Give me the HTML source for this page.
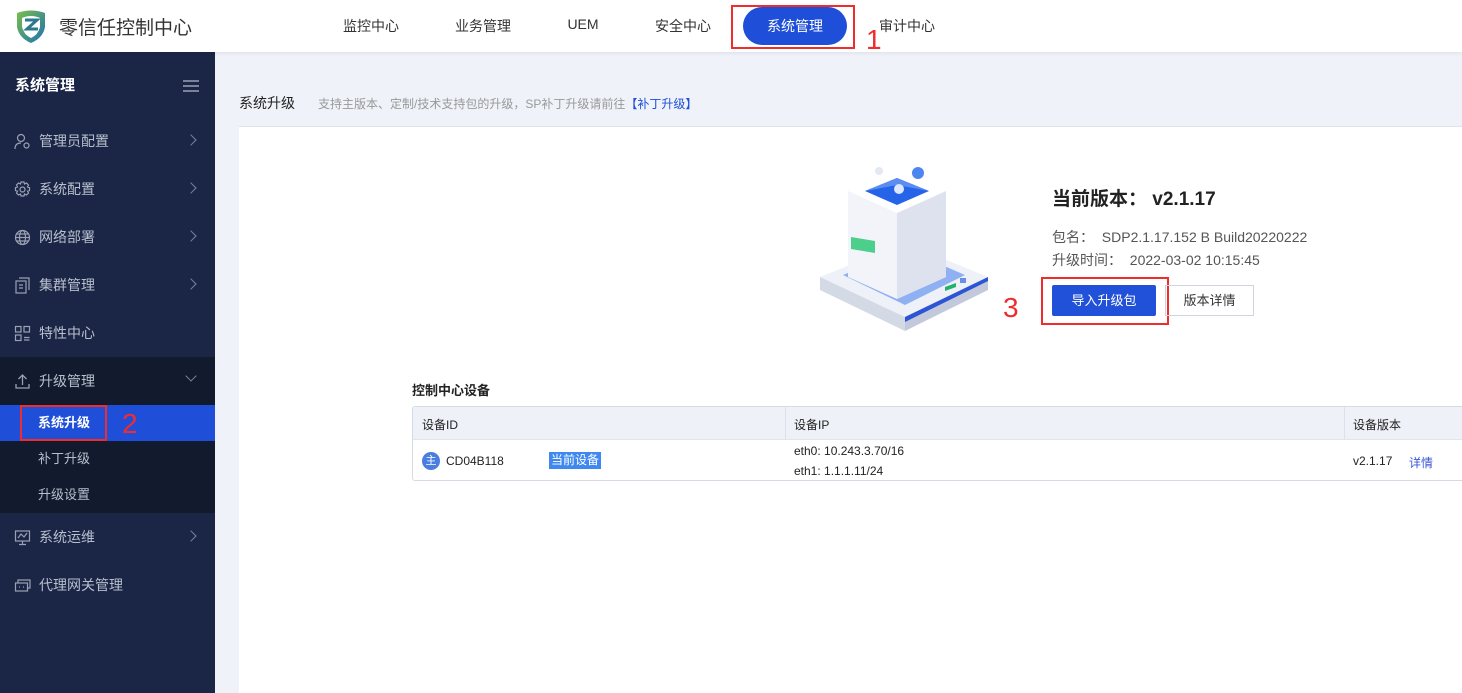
<!DOCTYPE html>
<html><head><meta charset="utf-8">
<style>
*{margin:0;padding:0;box-sizing:border-box}
body{width:1462px;height:693px;overflow:hidden;background:#eff2f9;font-family:"Liberation Sans","Noto Sans CJK SC",sans-serif;position:relative;color:#333}
.abs{position:absolute}
.hdr{left:0;top:0;width:1462px;height:52px;background:#fff;box-shadow:0 1px 4px rgba(0,0,0,.08);z-index:2}
.nav{top:16px;font-size:14px;color:#333;transform:translateX(-50%);white-space:nowrap}
.side{left:0;top:52px;width:215px;height:641px;background:#1b2647}
.item{left:0;width:215px;height:48px;color:#b8bfcc;font-size:14px;line-height:48px;padding-left:39px}
.ico{position:absolute;left:14px;top:16px;width:17px;height:17px}
.chev{position:absolute;left:187px;top:19px;width:8px;height:8px;border-right:1.3px solid #7a8299;border-top:1.3px solid #7a8299;transform:rotate(45deg)}
.sub{left:0;width:215px;height:36px;line-height:36px;padding-left:38px;font-size:13px;color:#b8bfcc}
.red{border:2px solid #f02c2c}
.rnum{color:#f02c2c;font-size:28px;font-family:"Liberation Sans",sans-serif}
</style></head><body>
<div class="abs hdr">
  <svg class="abs" style="left:15px;top:9px" width="32" height="35" viewBox="0 0 32 35">
    <defs><linearGradient id="g" x1="0" y1="0" x2="1" y2="1"><stop offset="0" stop-color="#7ac04a"/><stop offset="1" stop-color="#1c6fb5"/></linearGradient></defs>
    <path d="M2 4 Q16 -1 30 4 L30 18 Q28 29 16 34 Q4 29 2 18Z" fill="url(#g)"/>
    <path d="M7 9 Q16 5 25 9 L25 18 Q23 26 16 29 Q9 26 7 18Z" fill="#fff"/>
    <path d="M10 11 L22 11 L12 20 L23 20" stroke="#2a7a8c" stroke-width="3" fill="none"/>
  </svg>
  <div class="abs" style="left:59px;top:13px;font-size:19px;color:#333">零信任控制中心</div>
  <div class="abs nav" style="left:371px">监控中心</div>
  <div class="abs nav" style="left:483px">业务管理</div>
  <div class="abs nav" style="left:583px">UEM</div>
  <div class="abs nav" style="left:683px">安全中心</div>
  <div class="abs red" style="left:731px;top:5px;width:124px;height:44px"></div>
  <div class="abs" style="left:743px;top:7px;width:104px;height:38px;border-radius:19px;background:#1f4fd8;color:#fff;font-size:14px;line-height:38px;text-align:center">系统管理</div>
  <div class="abs nav" style="left:907px">审计中心</div>
  <div class="abs rnum" style="left:866px;top:24px">1</div>
</div>

<div class="abs side">
  <div class="abs" style="left:15px;top:22px;color:#fff;font-size:15px;font-weight:bold">系统管理</div>
  <div class="abs" style="left:183px;top:28px;width:16px;height:2px;background:#7a8299;box-shadow:0 5px 0 #7a8299,0 10px 0 #7a8299"></div>
</div>
<div class="abs item" style="top:117px"><svg class="ico" viewBox="0 0 17 17" fill="none" stroke="#9aa1b2" stroke-width="1.2"><circle cx="7" cy="5" r="3.5"/><path d="M1 16 Q1 10 7 10"/><circle cx="12.5" cy="12.5" r="2.5"/></svg>管理员配置<span class="chev"></span></div>
<div class="abs item" style="top:165px"><svg class="ico" viewBox="0 0 17 17" fill="none" stroke="#9aa1b2" stroke-width="1.2"><circle cx="8.5" cy="8.5" r="2.5"/><path d="M7 1h3l.5 2 2-1 2 2-1 2 2 .5v3l-2 .5 1 2-2 2-2-1-.5 2h-3l-.5-2-2 1-2-2 1-2-2-.5v-3l2-.5-1-2 2-2 2 1z"/></svg>系统配置<span class="chev"></span></div>
<div class="abs item" style="top:213px"><svg class="ico" viewBox="0 0 17 17" fill="none" stroke="#9aa1b2" stroke-width="1.2"><circle cx="8.5" cy="8.5" r="7"/><ellipse cx="8.5" cy="8.5" rx="3" ry="7"/><path d="M1.5 8.5h14M2.5 5h12M2.5 12h12"/></svg>网络部署<span class="chev"></span></div>
<div class="abs item" style="top:261px"><svg class="ico" viewBox="0 0 17 17" fill="none" stroke="#9aa1b2" stroke-width="1.2"><rect x="2" y="4" width="10" height="12"/><path d="M5 1h10v12"/><path d="M5 8h4M5 11h4"/></svg>集群管理<span class="chev"></span></div>
<div class="abs item" style="top:309px"><svg class="ico" viewBox="0 0 17 17" fill="none" stroke="#9aa1b2" stroke-width="1.2"><rect x="1.5" y="1.5" width="5.5" height="5.5"/><rect x="10" y="1.5" width="5.5" height="5.5"/><rect x="1.5" y="10" width="5.5" height="5.5"/><path d="M10 12.5h5.5M10 15h5.5"/></svg>特性中心</div>
<div class="abs" style="left:0;top:357px;width:215px;height:156px;background:#121a2e"></div>
<div class="abs item" style="top:357px"><svg class="ico" viewBox="0 0 17 17" fill="none" stroke="#9aa1b2" stroke-width="1.3"><path d="M8.5 12V2M4.5 6l4-4 4 4M2 11v4h13v-4"/></svg>升级管理<span class="chev" style="transform:rotate(135deg);top:15px"></span></div>
<div class="abs sub" style="top:405px;background:#1f4fd8;color:#fff;font-weight:bold">系统升级</div>
<div class="abs red" style="left:20px;top:405px;width:87px;height:36px"></div>
<div class="abs rnum" style="left:122px;top:408px">2</div>
<div class="abs sub" style="top:441px">补丁升级</div>
<div class="abs sub" style="top:477px">升级设置</div>
<div class="abs item" style="top:513px"><svg class="ico" viewBox="0 0 17 17" fill="none" stroke="#9aa1b2" stroke-width="1.2"><rect x="1.5" y="2" width="14" height="10"/><path d="M4 9l3-4 3 3 3-4M8.5 12v3M5 15.5h7"/></svg>系统运维<span class="chev"></span></div>
<div class="abs item" style="top:561px"><svg class="ico" viewBox="0 0 17 17" fill="none" stroke="#9aa1b2" stroke-width="1.2"><rect x="1.5" y="6" width="12" height="8"/><path d="M4 6V3h12v8h-2.5M5 10h1M9 10h1"/></svg>代理网关管理</div>

<div class="abs" style="left:239px;top:93px;font-size:14px;color:#222">系统升级</div>
<div class="abs" style="left:318px;top:95px;font-size:12px;color:#999">支持主版本、定制/技术支持包的升级，SP补丁升级请前往<span style="color:#1f4fd8">【补丁升级】</span></div>
<div class="abs" style="left:239px;top:126px;width:1223px;height:567px;background:#fff;border-top:1px solid #e2e4ea"></div>

<svg class="abs" style="left:815px;top:165px" width="178" height="170" viewBox="0 0 178 170">
  <path d="M5 112 L90 78 L173 112 L90 152Z" fill="#eef1f8"/>
  <path d="M5 112 L90 152 L90 166 L5 125Z" fill="#d4d9e6"/>
  <path d="M173 112 L90 152 L90 166 L173 125Z" fill="#c3c9da"/>
  <path d="M90 152 L173 112 L173 116 L90 157Z" fill="#2b55d4"/>
  <path d="M28 110 L90 84 L150 110 L90 140Z" fill="#8fb0f2"/>
  <path d="M33 26 L82 6 L131 26 L131 112 L82 134 L33 112Z" fill="#f2f4fa"/>
  <path d="M82 48 L131 26 L131 112 L82 134Z" fill="#dde2ee"/>
  <path d="M33 26 L82 6 L131 26 L82 48Z" fill="#fff"/>
  <path d="M50 26 L82 13 L114 26 L82 40Z" fill="#2563e8"/>
  <path d="M50 26 L82 13 L114 26 L82 20Z" fill="#5a8cf2"/>
  <circle cx="84" cy="24" r="5" fill="#dde8ff"/>
  <circle cx="103" cy="8" r="6" fill="#4d86f0"/>
  <circle cx="64" cy="6" r="4" fill="#e4e8f0"/>
  <path d="M36 72 L60 76 L60 88 L36 84Z" fill="#4ccf8a"/>
  <path d="M130 122 L141 118 L141 122 L130 126Z" fill="#22b26b"/>
  <rect x="145" y="113" width="6" height="5" fill="#6a8fe8"/>
</svg>

<div class="abs" style="left:1052px;top:184px;font-size:19px;font-weight:bold;color:#222">当前版本： v2.1.17</div>
<div class="abs" style="left:1052px;top:227px;font-size:14px;color:#555">包名：&nbsp; SDP2.1.17.152 B Build20220222</div>
<div class="abs" style="left:1052px;top:250px;font-size:14px;color:#555">升级时间：&nbsp; 2022-03-02 10:15:45</div>
<div class="abs" style="left:1052px;top:285px;width:104px;height:31px;background:#2251d9;color:#fff;border-radius:2px;font-size:13px;line-height:31px;text-align:center">导入升级包</div>
<div class="abs red" style="left:1041px;top:277px;width:128px;height:48px"></div>
<div class="abs" style="left:1165px;top:285px;width:89px;height:31px;border:1px solid #cfd4de;font-size:13px;line-height:29px;text-align:center;color:#333">版本详情</div>
<div class="abs rnum" style="left:1003px;top:292px">3</div>

<div class="abs" style="left:412px;top:380px;font-size:13px;font-weight:bold;color:#222">控制中心设备</div>
<div class="abs" style="left:412px;top:406px;width:1060px;height:75px;border:1px solid #d6dae3;border-radius:3px;overflow:hidden;font-size:12px;color:#222">
  <div class="abs" style="left:0;top:0;width:1060px;height:33px;background:#eef1f7;border-bottom:1px solid #e2e5ec"></div>
  <div class="abs" style="left:372px;top:0;width:1px;height:33px;background:#dde1e9"></div>
  <div class="abs" style="left:931px;top:0;width:1px;height:33px;background:#dde1e9"></div>
  <div class="abs" style="left:9px;top:9px">设备ID</div>
  <div class="abs" style="left:381px;top:9px">设备IP</div>
  <div class="abs" style="left:940px;top:9px">设备版本</div>
  <div class="abs" style="left:9px;top:45px;width:18px;height:18px;border-radius:50%;background:#4a7de0;color:#fff;font-size:11px;line-height:18px;text-align:center">主</div>
  <div class="abs" style="left:33px;top:47px">CD04B118</div>
  <div class="abs" style="left:136px;top:45px;height:17px;padding:0 2px;background:#3e88f0;color:#fff;line-height:17px">当前设备</div>
  <div class="abs" style="left:381px;top:37px">eth0: 10.243.3.70/16</div>
  <div class="abs" style="left:381px;top:57px">eth1: 1.1.1.11/24</div>
  <div class="abs" style="left:940px;top:47px">v2.1.17</div>
  <div class="abs" style="left:996px;top:47px;color:#3a55d6">详情</div>
</div>
</body></html>
